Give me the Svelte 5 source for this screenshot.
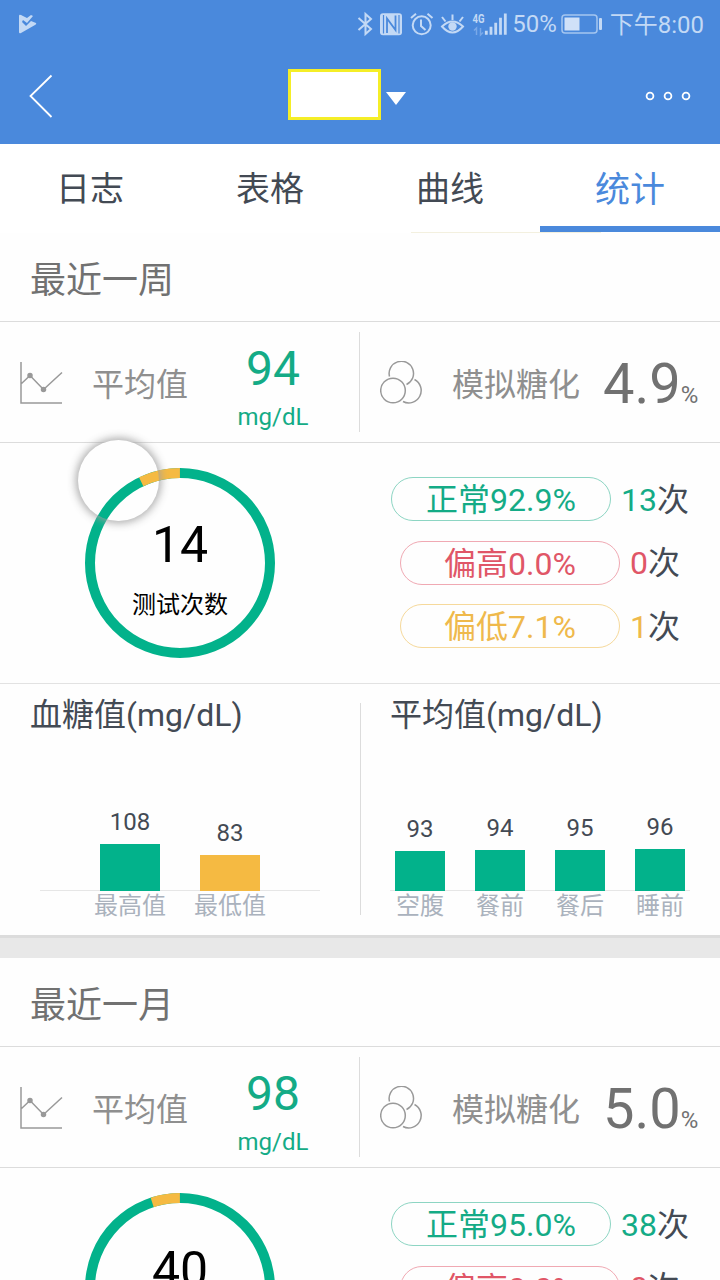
<script>
	const tabs = ["日志", "表格", "曲线", "统计"];
	let active = 3;

	const unit = "mg/dL";
	const green = "#02b28b";
	const yellow = "#f5ba42";

	const periods = [
		{
			title: "最近一周",
			average: 94,
			hba1c: "4.9",
			total: 14,
			low: 7.1,
			levels: [
				{ name: "正常", kind: "normal", percent: "92.9%", count: 13 },
				{ name: "偏高", kind: "high", percent: "0.0%", count: 0 },
				{ name: "偏低", kind: "low", percent: "7.1%", count: 1 },
			],
			charts: [
				{
					title: "血糖值",
					kind: "wide",
					bars: [
						{ label: "最高值", value: 108, color: green },
						{ label: "最低值", value: 83, color: yellow },
					],
				},
				{
					title: "平均值",
					kind: "narrow",
					bars: [
						{ label: "空腹", value: 93, color: green },
						{ label: "餐前", value: 94, color: green },
						{ label: "餐后", value: 95, color: green },
						{ label: "睡前", value: 96, color: green },
					],
				},
			],
		},
		{
			title: "最近一月",
			average: 98,
			hba1c: "5.0",
			total: 40,
			low: 5,
			levels: [
				{ name: "正常", kind: "normal", percent: "95.0%", count: 38 },
				{ name: "偏高", kind: "high", percent: "0.0%", count: 0 },
				{ name: "偏低", kind: "low", percent: "5.0%", count: 2 },
			],
			charts: [],
		},
	];

	const barHeight = (value) => Math.round(value * 4.333) / 10;
</script>

<div class="screen">
	<header>
		<div class="status">
			<svg class="play" width="20" height="20" viewBox="0 0 20 20">
				<path d="M1 2Q1 0 3 1L9 4L13 1L15 2L9 9L5 6L4 8L8 12L13 7L18 9Q19 10 17 11L3 19Q1 20 1 18Z" fill="#c3d9f5" />
			</svg>
			<svg width="151" height="26" viewBox="0 0 151 26" fill="none" stroke="#c3d9f5" stroke-width="2">
				<path d="M1.5 7L14 18L8.5 23V3L14 8L1.5 19" />
				<rect x="23" y="2.3" width="22" height="22" rx="3" fill="#c3d9f5" stroke="none" />
				<path d="M30 22V7.500L38.500 19V4.500" stroke="#4a89dc" stroke-width="1.800" />
				<path d="M26.500 4V22.500M42 4V22.500" stroke="#4a89dc" stroke-width="1.200" />
				<circle cx="64.7" cy="14.3" r="9" />
				<path d="M64 8.500V15L68.500 19M54 7L59 2.800M75.500 7L70.500 2.800" />
				<path d="M85 15.500Q95.500 5.500 106 15.500Q95.500 27.500 85 15.500Z" />
				<circle cx="95.500" cy="15.500" r="4.200" fill="#c3d9f5" stroke="none" />
				<path d="M95.500 9V3.500M88.500 10.500L85 6M102.500 10.500L106 6" />
				<text x="115.500" y="12" class="net" textLength="12" lengthAdjust="spacingAndGlyphs" fill="#c3d9f5" stroke="none">4G</text>
				<path d="M119.500 24V17L117 19.500M123.500 17V24L126 21.500" stroke="#7aa9e8" stroke-width="1.500" />
				<path d="M129.300 23.700V19.700M134 23.700V15.700M138.700 23.700V11.700M143.500 23.700V6.700M148.300 23.700V2.500" stroke-width="2.800" />
			</svg>
			<span class="level">50%</span>
			<svg width="42" height="20" viewBox="0 0 42 20">
				<rect x="1" y="1" width="35" height="18" rx="3" fill="none" stroke="#a5c6f0" stroke-width="1.500" />
				<rect x="3.500" y="3.500" width="15" height="13" fill="#d0e1f8" />
				<rect x="38" y="4" width="3" height="12" rx="1" fill="#c3d9f5" />
			</svg>
			<span class="clock">下午8:00</span>
		</div>
		<div class="nav">
			<svg width="24" height="44" viewBox="0 0 24 44">
				<path d="M22.500 1.500L1.500 22L22.500 43" fill="none" stroke="#fff" stroke-width="1.800" />
			</svg>
			<div class="user">
				<span class="name"></span>
				<svg width="20" height="13" viewBox="0 0 20 13"><path d="M0 0H20L10 13Z" fill="#fff" /></svg>
			</div>
			<svg width="46" height="10" viewBox="0 0 46 10" fill="none" stroke="#fff" stroke-width="1.800">
				<circle cx="5" cy="5" r="3.400" />
				<circle cx="23" cy="5" r="3.400" />
				<circle cx="41" cy="5" r="3.400" />
			</svg>
		</div>
	</header>

	<nav class="tabs">
		{#each tabs as tab, i}
			<button class:active={i === active} on:click={() => (active = i)}>{tab}</button>
		{/each}
	</nav>

	{#each periods as period, p}
		<section>
			<h2>{period.title}</h2>

			<div class="metrics">
				<div class="metric">
					<svg width="44" height="44" viewBox="0 0 44 44" fill="none" stroke="#999" stroke-width="1.500">
						<path d="M1 1V42H42M1 23L10 14.500L23.500 28.500L42 11.500" />
						<circle cx="10" cy="14.500" r="2" fill="#999" />
						<circle cx="23.500" cy="28.500" r="2" fill="#999" />
					</svg>
					<span class="label">平均值</span>
					<div class="average">
						<strong>{period.average}</strong>
						<span>{unit}</span>
					</div>
				</div>
				<div class="metric">
					<svg width="44" height="44" viewBox="0 0 44 44" fill="none" stroke="#999" stroke-width="1.500">
						<circle cx="13" cy="29.500" r="12.300" />
						<path d="M9.500 15.500A12.200 12.200 0 1 1 26.500 23.500M34.500 18.500A12 12 0 1 1 23 40.500" />
					</svg>
					<span class="label">模拟糖化</span>
					<div class="hba1c">{period.hba1c}<small>%</small></div>
				</div>
			</div>

			<div class="summary">
				<div class="donut">
					<svg width="190" height="190" viewBox="0 0 190 190" fill="none" stroke-width="10">
						<circle cx="95" cy="95" r="90" stroke={green} />
						<circle
							cx="95"
							cy="95"
							r="90"
							stroke={yellow}
							pathLength="100"
							stroke-dasharray="{period.low} {100 - period.low}"
							transform="rotate({-90 - period.low * 3.6} 95 95)"
						/>
					</svg>
					<div class="total">
						<strong>{period.total}</strong>
						<span>测试次数</span>
					</div>
					{#if p === 0}
						<div class="bubble"></div>
					{/if}
				</div>
				<div class="levels">
					{#each period.levels as level}
						<div class="row {level.kind}">
							<span class="pill">{level.name}{level.percent}</span>
							<span class="count"><b>{level.count}</b>次</span>
						</div>
					{/each}
				</div>
			</div>

			{#if period.charts.length}
				<div class="charts">
					{#each period.charts as chart}
						<div class="chart {chart.kind}">
							<h3>{chart.title}({unit})</h3>
							<div class="bars">
								{#each chart.bars as bar}
									<div class="column">
										<span>{bar.value}</span>
										<div class="bar" style="height: {barHeight(bar.value)}px; background: {bar.color}"></div>
									</div>
								{/each}
							</div>
							<div class="names">
								{#each chart.bars as bar}
									<span>{bar.label}</span>
								{/each}
							</div>
						</div>
					{/each}
				</div>
				<div class="gap"></div>
			{/if}
		</section>
	{/each}
</div>

<style>
	:global(body) {
		margin: 0;
	}
	.screen {
		width: 720px;
		height: 1280px;
		overflow: hidden;
		background: #fefefe;
		color: #434a54;
		font-family: Roboto, "Noto Sans CJK SC", sans-serif;
	}
	.screen * {
		box-sizing: border-box;
	}
	svg {
		display: block;
		flex: none;
	}
	header {
		height: 144px;
		background: #4a89dc;
	}
	.status {
		display: flex;
		align-items: center;
		height: 48px;
		padding: 0 16px 0 18px;
		color: #c3d9f5;
		font-size: 24px;
		line-height: 48px;
	}
	.play {
		margin-right: auto;
	}
	.net {
		font-size: 13px;
		font-weight: 700;
	}
	.level {
		margin: 0 4px;
	}
	.clock {
		margin-left: 7px;
		padding-top: 2px;
		white-space: nowrap;
	}
	.nav {
		display: grid;
		grid-template-columns: 259px 1fr auto;
		align-items: center;
		height: 96px;
		padding: 0 29px;
	}
	.user {
		display: flex;
		align-items: center;
		gap: 5px;
	}
	.user svg {
		margin-top: 5px;
	}
	.name {
		width: 93px;
		height: 51px;
		margin-top: -3px;
		border: 3px solid #f5ee27;
		background: #fff;
	}
	.tabs {
		display: grid;
		grid-template-columns: repeat(4, 180px);
		height: 89px;
		background: linear-gradient(90deg, #f3f0df, #f3f0df) 411px 88px / 190px 1px no-repeat #fff;
	}
	button {
		height: 88px;
		margin: 0;
		padding: 2px 0 0;
		border: 0;
		border-bottom: 6px solid transparent;
		background: none;
		color: #434a54;
		font: inherit;
		font-size: 34px;
	}
	button.active {
		border-color: #4a89dc;
		color: #4a89dc;
		font-size: 35px;
	}
	h2 {
		height: 89px;
		margin: 0;
		padding: 4px 30px 0;
		border-bottom: 1px solid #dcdcdc;
		color: #717171;
		font-size: 36px;
		font-weight: 400;
		line-height: 88px;
	}
	.metrics {
		display: grid;
		grid-template-columns: 360px 360px;
		height: 121px;
		padding: 10px 0;
		border-bottom: 1px solid #dcdcdc;
	}
	.metric {
		display: flex;
		align-items: center;
		height: 100px;
		padding-left: 20px;
		color: #8f8f8f;
	}
	.metric:first-child {
		border-right: 1px solid #dcdcdc;
	}
	.metric svg {
		margin-top: 2px;
	}
	.label {
		width: 128px;
		margin-left: 28px;
		font-size: 32px;
	}
	.average {
		display: flex;
		flex-direction: column;
		align-items: center;
		width: 106px;
		padding-top: 5px;
		color: #14ab86;
		font-size: 24px;
		line-height: 32px;
	}
	.average strong {
		font-size: 48px;
		font-weight: 400;
		line-height: 64px;
	}
	.hba1c {
		margin-left: 23px;
		padding-top: 15px;
		color: #717171;
		font-size: 56px;
		line-height: 100px;
	}
	small {
		font-size: 24px;
	}
	.summary {
		display: grid;
		grid-template-columns: 360px 360px;
		align-items: center;
		height: 241px;
		padding-bottom: 1px;
		border-bottom: 1px solid #e2e2e2;
	}
	.donut {
		position: relative;
		display: grid;
		width: 190px;
		height: 190px;
		margin: 0 auto;
	}
	.donut > svg,
	.total {
		z-index: 1;
		grid-area: 1 / 1;
	}
	.total {
		display: flex;
		flex-direction: column;
		align-items: center;
		padding-top: 45px;
		color: #000;
		font-size: 24px;
		line-height: 36px;
	}
	.total strong {
		margin-bottom: 9px;
		font-size: 50px;
		font-weight: 400;
		line-height: 65px;
	}
	/* floating touch button: the fill is under the ring, its shadow is over it */
	.bubble::before,
	.bubble::after {
		position: absolute;
		top: -28px;
		left: -7px;
		width: 81px;
		height: 81px;
		border-radius: 50%;
		content: "";
	}
	.bubble::before {
		background: #fefefe;
	}
	.bubble::after {
		z-index: 2;
		box-shadow: 0 0 9px 2px rgba(160, 160, 160, 0.9);
	}
	.levels {
		display: flex;
		flex-direction: column;
		align-items: center;
		gap: 19.5px;
	}
	.row {
		display: flex;
		align-items: center;
		gap: 10px;
		height: 44px;
		font-size: 32px;
		line-height: 44px;
	}
	.pill {
		width: 220px;
		height: 44px;
		border: 1px solid;
		border-radius: 22px;
		line-height: 45px;
		text-align: center;
	}
	.count {
		padding-top: 1px;
	}
	b {
		font-weight: 400;
	}
	.normal .pill {
		border-color: #8dd5c3;
	}
	.high .pill {
		border-color: #f0a9b3;
	}
	.low .pill {
		border-color: #f6d99b;
	}
	.normal .pill,
	.normal b {
		color: #14ab86;
	}
	.high .pill,
	.high b {
		color: #e05667;
	}
	.low .pill,
	.low b {
		color: #efb94c;
	}
	.charts {
		display: grid;
		grid-template-columns: 360px 360px;
		height: 251px;
		background: linear-gradient(#dcdcdc, #dcdcdc) 360px 19px / 1px 212px no-repeat;
	}
	h3 {
		height: 62px;
		margin: 0;
		padding-left: 30px;
		font-size: 32px;
		font-weight: 400;
		line-height: 62px;
	}
	.bars,
	.names {
		display: flex;
		justify-content: center;
	}
	.bars {
		align-items: flex-end;
		height: 145px;
		margin: 0 40px;
		border-bottom: 1px solid #e6e6e6;
	}
	.narrow .bars {
		margin: 0 30px;
	}
	.column {
		display: flex;
		flex: none;
		flex-direction: column;
		align-items: center;
		width: 100px;
		margin-bottom: -1px;
		font-size: 24px;
		line-height: 28px;
	}
	.narrow .column,
	.narrow .names span {
		width: 80px;
	}
	.bar {
		width: 60px;
		margin-top: 8px;
	}
	.narrow .bar {
		width: 50px;
	}
	.names span {
		width: 100px;
		color: #aab2bd;
		font-size: 24px;
		line-height: 30px;
		text-align: center;
	}
	.gap {
		height: 23px;
		border-top: 3px solid #dcdcdc;
		background: #e8e8e8;
	}
</style>
